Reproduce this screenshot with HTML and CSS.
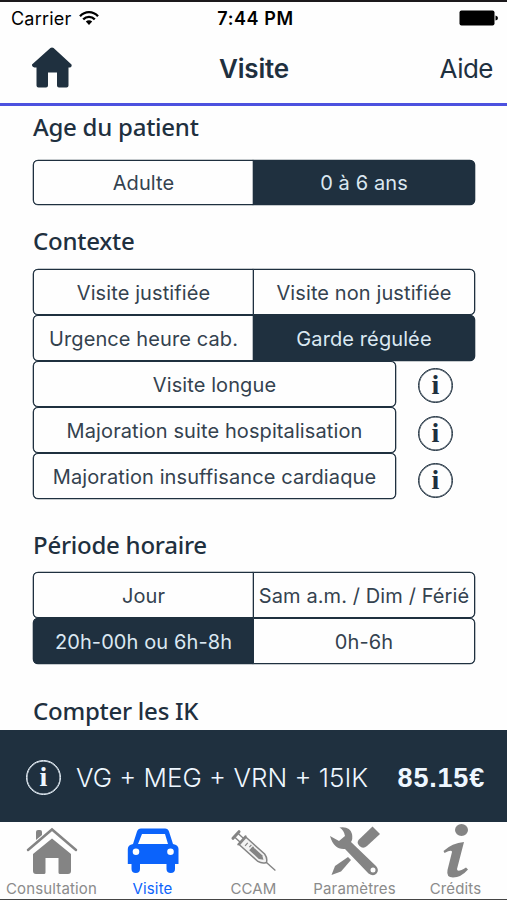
FILE: index.html
```html
<!DOCTYPE html>
<html lang="fr">
<head>
    <meta charset="UTF-8">
    <meta name="viewport" content="width=device-width, initial-scale=1.0">
    <title>Visite</title>
    <link rel="stylesheet" href="styles.css">
</head>
<body>
<div class="app">
    <div class="status-bar">
        <div class="carrier">
            <span>Carrier</span>
            <svg width="20" height="16" viewBox="0 0 20 16" fill="none" stroke="#000" stroke-width="2.3">
                <path d="M1 6.2C6 .7 14 .7 19 6.2"/>
                <path d="M4.2 9.4C7.6 5.9 12.4 5.9 15.8 9.4"/>
                <path d="M6.8 11.6C8.6 9.8 11.4 9.8 13.2 11.6L10 15z" fill="#000" stroke="none"/>
            </svg>
        </div>
        <div class="clock">7:44 PM</div>
        <svg class="battery" width="39" height="16" viewBox="0 0 39 16">
            <rect x=".5" y=".5" width="35" height="15" rx="2"/>
            <path d="M36.5 5.5Q39 6 39 8T36.5 10.5z"/>
        </svg>
    </div>

    <header class="navbar">
        <svg class="home" width="42" height="42" viewBox="0 0 42 42">
            <path d="M19.400 1Q21 0 22.600 1L40.500 17.500Q41.500 20.600 37.500 20.600V38.500Q37.500 40.500 35.500 40.500H28Q26 40.500 26 38.500V25.500H17V38.500Q17 40.500 15 40.500H7.500Q5.500 40.500 5.500 38.500V20.600Q.5 20.600 1 17.500z"/>
        </svg>
        <h1>Visite</h1>
        <a class="help">Aide</a>
    </header>

    <main class="content">
        <h2 class="age-title">Age du patient</h2>
        <div class="group">
            <div class="row single">
                <button>Adulte</button>
                <button class="active">0 à 6 ans</button>
            </div>
        </div>

        <h2 class="context-title">Contexte</h2>
        <div class="context">
            <div class="group">
                <div class="row">
                    <button>Visite justifiée</button>
                    <button>Visite non justifiée</button>
                </div>
                <div class="row">
                    <button>Urgence heure cab.</button>
                    <button class="active">Garde régulée</button>
                </div>
            </div>
            <div class="options">
                <div class="group narrow">
                    <div class="row"><button>Visite longue</button></div>
                    <div class="row"><button>Majoration suite hospitalisation</button></div>
                    <div class="row"><button>Majoration insuffisance cardiaque</button></div>
                </div>
                <div class="infos">
                    <span class="info">i</span>
                    <span class="info">i</span>
                    <span class="info">i</span>
                </div>
            </div>
        </div>

        <h2 class="period-title">Période horaire</h2>
        <div class="group">
            <div class="row">
                <button>Jour</button>
                <button>Sam a.m. / Dim / Férié</button>
            </div>
            <div class="row">
                <button class="active">20h-00h ou 6h-8h</button>
                <button>0h-6h</button>
            </div>
        </div>

        <h2 class="ik-title">Compter les IK</h2>
    </main>

    <div class="total">
        <span class="info">i</span>
        <span class="codes">VG + MEG + VRN + 15IK</span>
        <span class="price">85.15€</span>
    </div>

    <nav class="tabs">
        <a class="tab">
            <svg width="52" height="56" viewBox="0 0 52 56">
                <path d="M10 17V9Q10 7 12 7H14Q16 7 16 9V12z"/>
                <path d="M2 27L26 6.500L50 27" fill="none" stroke="#848484" stroke-width="2.500" stroke-linecap="round"/>
                <path d="M26 15.500L45 31V48Q45 51 42 51H34Q32.500 51 32.500 49.500V35H19.500V49.500Q19.500 51 18 51H10Q7 51 7 48V31z"/>
            </svg>
            <span>Consultation</span>
        </a>
        <a class="tab selected">
            <svg width="52" height="56" viewBox="0 0 52 56">
                <path fill-rule="evenodd" d="M14 5.500H38Q41 5.500 42 8.500L46 21Q51.500 22 51.500 26V41H48V46Q48 50 43.800 50T39.500 46V41H13V46Q13 50 8.800 50T4.500 46V41H.8V26Q.8 22 6 21L10 8.500Q11 5.500 14 5.500zM15 11L11 21H41L38 11zM9 25.500a3.300 3.300 0 1 0 0 6.600a3.300 3.300 0 1 0 0-6.600zM43.500 25.500a3.300 3.300 0 1 0 0 6.600a3.300 3.300 0 1 0 0-6.600z"/>
            </svg>
            <span>Visite</span>
        </a>
        <a class="tab">
            <svg width="52" height="56" viewBox="0 0 52 56" fill="none" stroke="#848484">
                <g transform="translate(8 12) rotate(42)">
                    <path d="M0-4.500V4.500" stroke-width="3" stroke-linecap="round"/>
                    <path d="M1-2.500H8M1 2.500H8" stroke-width="1.400"/>
                    <path d="M8-5.500V5.500" stroke-width="2" stroke-linecap="round"/>
                    <path d="M9-5H34Q39-4 41 0Q39 4 34 5H9z" fill="#f2f2f2" stroke-width="1.500"/>
                    <path d="M14-2V2M18-3V0M21-3V0" stroke-width="1.200"/>
                    <path d="M20-2.500H33L37 0L33 2.500H20z" fill="#848484" stroke="none"/>
                    <path d="M41 0H53" stroke-width="1.400"/>
                </g>
            </svg>
            <span>CCAM</span>
        </a>
        <a class="tab">
            <svg width="52" height="56" viewBox="0 0 52 56">
                <path d="M43.500 3.500L51 11L38 23Q34 26.500 30.500 23T30 16.500z"/>
                <path d="M19 34L22 37L12 48.500L2.500 52L6 43z"/>
                <path fill-rule="evenodd" d="M10.500 4.500Q21 3 23 11Q24 16 22 19L47 43Q50.500 47 47.500 50.500T39.500 50.500L16 26Q5 27 1 13L10 18L16 13Q15 7 10.500 4.500zM44 44.500a2.500 2.500 0 1 0 0 5a2.500 2.500 0 1 0 0-5z"/>
            </svg>
            <span>Paramètres</span>
        </a>
        <a class="tab">
            <svg width="52" height="56" viewBox="0 0 52 56">
                <ellipse cx="31.500" cy="7" rx="6.500" ry="6"/>
                <path d="M13.500 28Q22 20 34 19L27 46Q27 50 36 44.500L38 46.500Q31 54.500 23 54.500Q16 54.500 17.500 47L22 29Q22 26 14.500 30z"/>
            </svg>
            <span>Crédits</span>
        </a>
    </nav>
</div>
</body>
</html>
```
FILE: styles.css
```css
* {
    box-sizing: border-box;
    margin: 0;
    padding: 0;
}

body {
    background-color: #fefefe;
    color: #1f303f;
    font-family: Inter, "Liberation Sans", sans-serif;
}

.app {
    width: 507px;
    height: 900px;
    display: flex;
    flex-direction: column;
    overflow: hidden;
    border-top: 2px solid #1c191c;
    border-bottom: 1px solid #444;
}

.status-bar {
    height: 34px;
    flex: none;
    display: grid;
    grid-template-columns: 1fr auto 1fr;
    align-items: center;
    padding: 0 9px 2px 11px;
    color: #000;
    font-size: 18px;
}

.carrier {
    display: flex;
    align-items: center;
    gap: 8px;
    letter-spacing: 0.2px;
}

.clock {
    margin-left: 2px;
    font-weight: 600;
    letter-spacing: 0.6px;
}

.battery {
    justify-self: end;
}

.navbar {
    height: 70px;
    flex: none;
    display: grid;
    grid-template-columns: 1fr auto 1fr;
    align-items: center;
    padding: 0 14px 3px 31px;
    border-bottom: 3px solid #4c51df;
}

.home {
    fill: #1f303f;
}

.navbar h1 {
    margin-right: 16px;
    font-size: 26px;
    font-weight: 600;
    letter-spacing: -0.2px;
}

.help {
    justify-self: end;
    font-size: 26px;
    letter-spacing: -0.5px;
}

.content {
    height: 624px;
    flex: none;
    padding-left: 33px;
}

h2 {
    height: 32px;
    line-height: 32px;
    font-family: "Noto Sans", sans-serif;
    font-size: 24px;
    font-weight: 500;
    letter-spacing: -0.25px;
}

.age-title {
    margin-top: 5px;
    margin-bottom: 17px;
}

.context-title {
    margin-top: 20px;
    margin-bottom: 12px;
}

.period-title {
    margin-top: 30px;
    margin-bottom: 11px;
}

.ik-title {
    margin-top: 31px;
}

.group {
    width: 442px;
}

.group.narrow {
    width: 363px;
}

.row {
    display: flex;
    height: 46px;
}

.row.single {
    height: 45px;
}

button {
    flex: 1;
    height: 100%;
    padding-top: 1px;
    border: 1px solid #1f303f;
    border-radius: 5px;
    box-shadow: 0 0 0 0.3px #1f303f;
    background-color: #fefefe;
    color: #34424f;
    font-family: inherit;
    font-size: 20px;
    letter-spacing: 0.1px;
    white-space: nowrap;
}

.single button {
    padding-top: 0;
}

button:first-child:not(:last-child) {
    flex: 0 0 220px;
    border-right: none;
    border-radius: 5px 0 0 5px;
}

button:last-child:not(:first-child) {
    border-radius: 0 5px 5px 0;
}

button.active {
    background-color: #1f303f;
    color: #dbe8f2;
}

.options {
    display: flex;
    gap: 22px;
}

.infos {
    display: flex;
    flex-direction: column;
    gap: 12.5px;
    padding-top: 7px;
}

.info {
    width: 35px;
    height: 35px;
    border: 1px solid currentColor;
    border-radius: 50%;
    box-shadow: inset 0 0 0 0.5px currentColor;
    font: bold 28px/32px "Liberation Serif", serif;
    text-align: center;
}

.total {
    height: 92px;
    flex: none;
    display: flex;
    align-items: center;
    padding: 3px 22px 0 26px;
    background-color: #1f303f;
    color: #eef7ff;
}

.codes {
    margin-left: 15px;
    font-size: 26px;
    font-weight: 300;
}

.price {
    margin-left: auto;
    padding-top: 2px;
    font: bold 27px "Liberation Sans", sans-serif;
    letter-spacing: 0.8px;
}

.tabs {
    flex: 1;
    display: grid;
    grid-template-columns: repeat(5, 101px);
    padding: 1px 0 0 1px;
    background-color: #fefefe;
}

.tab {
    display: flex;
    flex-direction: column;
    align-items: center;
    gap: 1px;
    color: #8b8b8b;
    fill: #848484;
    font-size: 15px;
    line-height: 18px;
    letter-spacing: 0.15px;
}

.tab.selected {
    color: #0b63fb;
    fill: #0b63fb;
}
```
